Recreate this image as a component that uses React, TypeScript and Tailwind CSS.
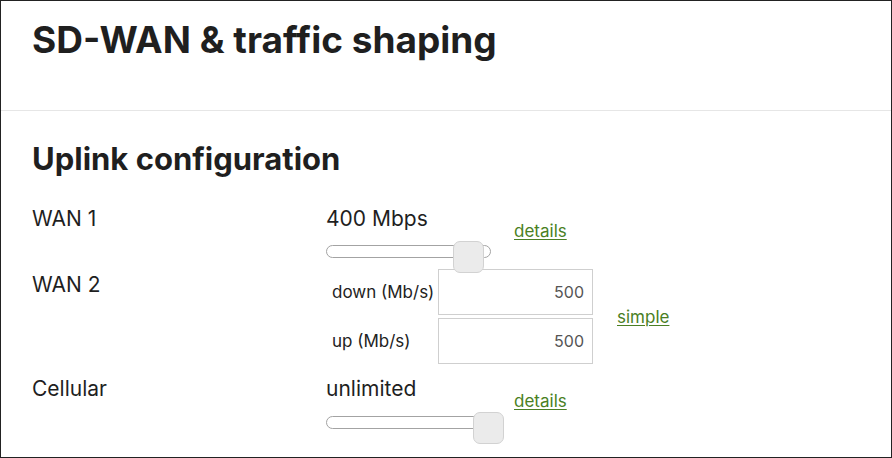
import React from 'react';

const font = { fontFamily: 'Inter, "Noto Sans", sans-serif' };

const Slider = ({ thumbLeft }: { thumbLeft: string }) => (
  <div className="relative w-[165px] h-[13px] rounded-full border border-[#a3a3a3] bg-white">
    <div
      className={`absolute -top-[5px] ${thumbLeft} w-[31px] h-[32px] rounded-[7px] border border-[#d2d2d2] bg-[#ebebeb]`}
    />
  </div>
);

const LinkText = ({ children, className = '' }: { children: React.ReactNode; className?: string }) => (
  <a href="#" className={`text-[17px] leading-6 text-[#4a7f24] underline underline-offset-2 ${className}`}>
    {children}
  </a>
);

const NumberField = ({ label, value }: { label: string; value: string }) => (
  <div className="flex items-center">
    <span className="w-[112px] pl-[6px] text-[17px] leading-6 text-[#222]">{label}</span>
    <div className="w-[155px] h-[46px] border border-[#cfcfcf] flex items-center justify-end pr-[8px] text-[16px] text-[#555]">
      {value}
    </div>
  </div>
);

export default function App() {
  return (
    <div className="w-[892px] h-[458px] box-border border border-[#222] bg-white text-[#1f1f1f] overflow-hidden" style={font}>
      {/* Page header */}
      <div className="pt-[17px] pb-[48px] px-[31px] border-b border-[#e6e6e6]">
        <h1 className="text-[37px] leading-[44px] font-bold">SD-WAN &amp; traffic shaping</h1>
      </div>

      <div className="px-[31px] pt-[30px]">
        <h2 className="text-[31px] leading-[36px] font-bold">Uplink configuration</h2>

        {/* WAN 1 */}
        <div className="grid grid-cols-[294px_1fr] mt-[30px]">
          <div className="text-[21px] leading-6">WAN 1</div>
          <div className="flex items-start">
            <div>
              <div className="text-[21px] leading-6">400 Mbps</div>
              <div className="mt-[14px]">
                <Slider thumbLeft="left-[126px]" />
              </div>
            </div>
            <LinkText className="ml-[23px] mt-3">details</LinkText>
          </div>
        </div>

        {/* WAN 2 */}
        <div className="grid grid-cols-[294px_1fr] mt-[11px]">
          <div className="text-[21px] leading-6 pt-1">WAN 2</div>
          <div className="flex items-center">
            <div className="flex flex-col gap-[3px]">
              <NumberField label="down (Mb/s)" value="500" />
              <NumberField label="up (Mb/s)" value="500" />
            </div>
            <LinkText className="ml-[24px]">simple</LinkText>
          </div>
        </div>

        {/* Cellular */}
        <div className="grid grid-cols-[294px_1fr] mt-[13px]">
          <div className="text-[21px] leading-6">Cellular</div>
          <div className="flex items-start">
            <div>
              <div className="text-[21px] leading-6">unlimited</div>
              <div className="mt-[15px]">
                <Slider thumbLeft="left-[146px]" />
              </div>
            </div>
            <LinkText className="ml-[23px] mt-3">details</LinkText>
          </div>
        </div>
      </div>
    </div>
  );
}
